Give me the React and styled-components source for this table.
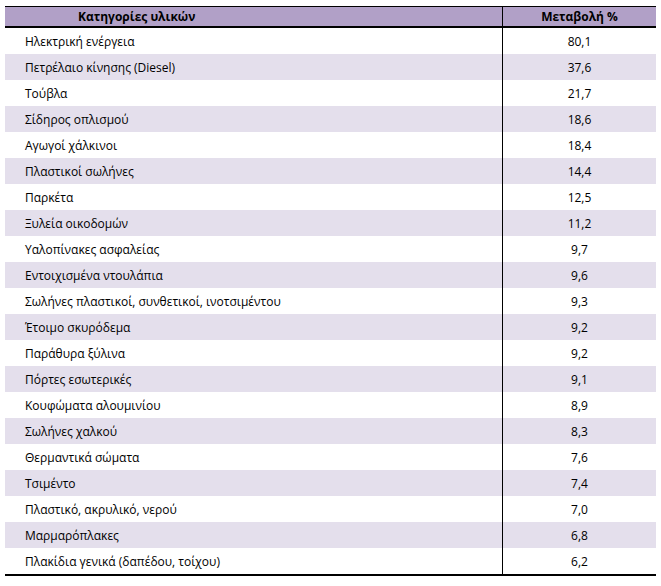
import React from 'react';
import styled, { createGlobalStyle } from 'styled-components';

const GlobalStyle = createGlobalStyle`
  html, body {
    margin: 0;
    padding: 0;
    background: #fff;
  }
`;

const rows = [
  ['Ηλεκτρική ενέργεια', '80,1'],
  ['Πετρέλαιο κίνησης (Diesel)', '37,6'],
  ['Τούβλα', '21,7'],
  ['Σίδηρος οπλισμού', '18,6'],
  ['Αγωγοί χάλκινοι', '18,4'],
  ['Πλαστικοί σωλήνες', '14,4'],
  ['Παρκέτα', '12,5'],
  ['Ξυλεία οικοδομών', '11,2'],
  ['Υαλοπίνακες ασφαλείας', '9,7'],
  ['Εντοιχισμένα ντουλάπια', '9,6'],
  ['Σωλήνες πλαστικοί, συνθετικοί, ινοτσιμέντου', '9,3'],
  ['Έτοιμο σκυρόδεμα', '9,2'],
  ['Παράθυρα ξύλινα', '9,2'],
  ['Πόρτες εσωτερικές', '9,1'],
  ['Κουφώματα αλουμινίου', '8,9'],
  ['Σωλήνες χαλκού', '8,3'],
  ['Θερμαντικά σώματα', '7,6'],
  ['Τσιμέντο', '7,4'],
  ['Πλαστικό, ακρυλικό, νερού', '7,0'],
  ['Μαρμαρόπλακες', '6,8'],
  ['Πλακίδια γενικά (δαπέδου, τοίχου)', '6,2'],
];

const Table = styled.div`
  margin: 6px 0 0 5px;
  width: 651px;
  font-family: 'Open Sans', 'Liberation Sans', sans-serif;
  font-size: 12px;
  color: #000;
  border-bottom: 2px solid #000;
`;

const Row = styled.div`
  display: grid;
  grid-template-columns: 497px 1fr;
  height: ${p => (p.$head ? '19px' : '26px')};
  background: ${p => (p.$head ? '#b1a0c7' : p.$shade ? '#e4dfec' : '#fff')};
  border-top: ${p => (p.$head ? '1px solid #000' : 'none')};
  border-bottom: ${p => (p.$head ? '2px solid #000' : 'none')};
  font-weight: ${p => (p.$head ? 700 : 400)};
`;

const Cell = styled.div`
  display: flex;
  align-items: center;
  justify-content: ${p => (p.$center ? 'center' : 'flex-start')};
  padding-left: ${p => p.$pad || 0}px;
  border-left: ${p => (p.$divider ? '1px solid #000' : 'none')};
  white-space: nowrap;
`;

export default function App() {
  return (
    <>
      <GlobalStyle />
      <Table>
        <Row $head>
          <Cell $pad={73}>Κατηγορίες υλικών</Cell>
          <Cell $center $divider>Μεταβολή %</Cell>
        </Row>
        {rows.map(([name, value], i) => (
          <Row key={name} $shade={i % 2 === 1}>
            <Cell $pad={20}>{name}</Cell>
            <Cell $center $divider>{value}</Cell>
          </Row>
        ))}
      </Table>
    </>
  );
}
